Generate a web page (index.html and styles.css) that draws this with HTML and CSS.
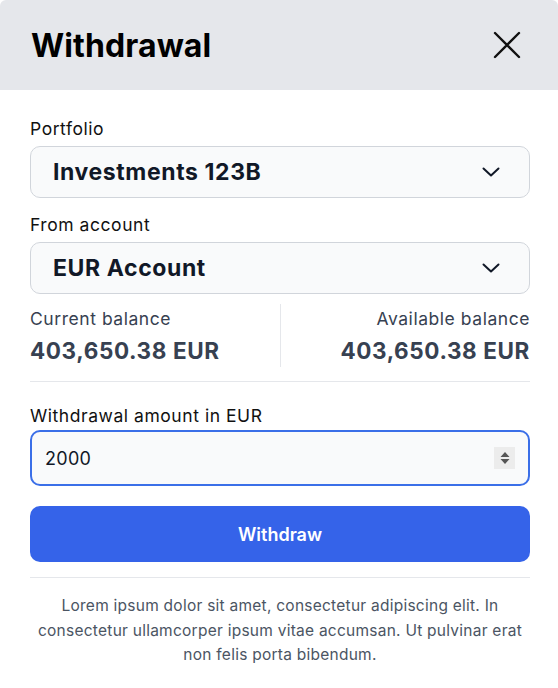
FILE: index.html
```html
<!DOCTYPE html>
<html>
<head>
<meta charset="utf-8">
<link rel="stylesheet" href="styles.css">
</head>
<body>
<div class="modal">
  <header class="modal-header">
    <h1 class="title">Withdrawal</h1>
    <button class="close" aria-label="Close">
      <svg width="28" height="28" viewBox="0 0 28 28"><path d="M2 2 L26 26 M26 2 L2 26" stroke="#111" stroke-width="2.4" fill="none" stroke-linecap="round"/></svg>
    </button>
  </header>
  <div class="modal-body">
    <div class="field">
      <label class="label">Portfolio</label>
      <div class="select">
        <span class="select-value">Investments 123B</span>
        <svg class="chevron" width="18" height="10" viewBox="0 0 18 10"><path d="M1.5 1.5 L9 8.5 L16.5 1.5" stroke="#111827" stroke-width="2" fill="none" stroke-linecap="round" stroke-linejoin="round"/></svg>
      </div>
    </div>
    <div class="field">
      <label class="label">From account</label>
      <div class="select">
        <span class="select-value">EUR Account</span>
        <svg class="chevron" width="18" height="10" viewBox="0 0 18 10"><path d="M1.5 1.5 L9 8.5 L16.5 1.5" stroke="#111827" stroke-width="2" fill="none" stroke-linecap="round" stroke-linejoin="round"/></svg>
      </div>
    </div>
    <div class="balances">
      <div class="balance">
        <div class="balance-label">Current balance</div>
        <div class="balance-value">403,650.38 EUR</div>
      </div>
      <div class="vdivider"></div>
      <div class="balance right">
        <div class="balance-label">Available balance</div>
        <div class="balance-value">403,650.38 EUR</div>
      </div>
    </div>
    <div class="field amount-field">
      <label class="label">Withdrawal amount in EUR</label>
      <div class="input">
        <span class="input-value">2000</span>
        <span class="spinner">
          <svg width="14" height="20" viewBox="0 0 14 20"><path d="M7 4 L11.5 9 L2.5 9 Z M2.5 11 L11.5 11 L7 16 Z" fill="#555"/></svg>
        </span>
      </div>
    </div>
    <button class="primary">Withdraw</button>
    <div class="hdivider"></div>
    <p class="note">Lorem ipsum dolor sit amet, consectetur adipiscing elit. In consectetur ullamcorper ipsum vitae accumsan. Ut pulvinar erat non felis porta bibendum.</p>
  </div>
</div>
</body>
</html>
```
FILE: styles.css
```css
* { box-sizing: border-box; }
html, body { margin: 0; padding: 0; background: #fff; }
body { font-family: Inter, "Noto Sans", sans-serif; color: #111827; }
.modal { width: 558px; background: #fff; border-radius: 6px 6px 0 0; overflow: hidden; }
.modal-header {
  height: 90px; background: #e5e7eb;
  display: flex; align-items: center; justify-content: space-between;
  padding: 0 37px 0 31px;
}
.title { margin: 0; font-size: 32px; font-weight: 700; color: #000; letter-spacing: 0.1px; }
.close { background: none; border: 0; padding: 0; display: flex; cursor: pointer; }
.modal-body { padding: 28px 28px 0 30px; }
.field { display: flex; flex-direction: column; }
.label { font-size: 17.5px; color: #111; line-height: 22px; margin-bottom: 6px; letter-spacing: 0.55px; }
.field + .field { margin-top: 16px; }
.select {
  height: 52px; background: #f9fafb; border: 1px solid #d1d5db; border-radius: 10px;
  display: flex; align-items: center; justify-content: space-between;
  padding: 0 29px 0 22px;
}
.select-value { font-size: 23px; font-weight: 700; color: #111827; letter-spacing: 0.6px; }
.balances { display: flex; margin-top: 13px; padding-bottom: 14px; border-bottom: 1px solid #e5e7eb; }
.balance { flex: 1; display: flex; flex-direction: column; }
.balance.right { align-items: flex-end; }
.balance-label { font-size: 17.5px; color: #374151; line-height: 24px; letter-spacing: 0.55px; }
.balance-value { font-size: 22.5px; font-weight: 700; color: #374151; line-height: 32px; margin-top: 4px; letter-spacing: 0.6px; }
.vdivider { width: 1px; background: #e5e7eb; margin-top: -3px; }
.amount-field { margin-top: 23px; }
.amount-field .label { margin-bottom: 3px; }
.input {
  height: 56px; background: #f9fafb; border: 2px solid #3b6fe8; border-radius: 10px;
  display: flex; align-items: center; justify-content: space-between;
  padding: 0 13px 0 13px;
}
.input-value { font-size: 18px; color: #111827; letter-spacing: 0.3px; }
.spinner { width: 21px; height: 22px; background: #ececec; display: flex; align-items: center; justify-content: center; }
.primary {
  display: block; width: 100%; height: 56px; margin-top: 20px;
  background: #3563e9; color: #fff; border: 0; border-radius: 10px;
  font-family: Inter, sans-serif; font-size: 18px; font-weight: 600;
}
.hdivider { height: 1px; background: #e5e7eb; margin-top: 15px; }
.note { margin: 16px 0 0; text-align: center; font-size: 15.5px; line-height: 24.5px; color: #4b5563; letter-spacing: 0.25px; }
```
